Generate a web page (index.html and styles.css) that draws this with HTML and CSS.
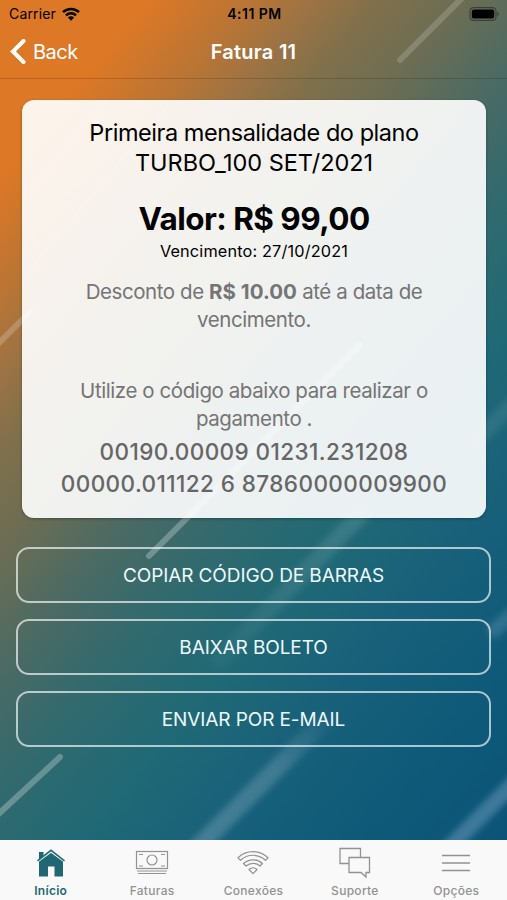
FILE: index.html
```
<!DOCTYPE html>
<html lang="pt-BR">
<head>
	<meta charset="UTF-8">
	<title>Fatura 11</title>
	<link rel="stylesheet" href="styles.css">
</head>
<body>
	<div class="app">
		<svg class="streaks" viewBox="0 0 507 840" aria-hidden="true">
			<defs>
				<filter id="soft" x="-20%" y="-20%" width="140%" height="140%">
					<feGaussianBlur stdDeviation="3"/>
				</filter>
				<linearGradient id="fadeUp" gradientUnits="userSpaceOnUse" x1="150" y1="554" x2="360" y2="345">
					<stop offset="0" stop-color="#fff" stop-opacity=".27"/>
					<stop offset="1" stop-color="#fff" stop-opacity=".25"/>
				</linearGradient>
				<linearGradient id="fadeEnds" gradientUnits="userSpaceOnUse" x1="355" y1="520" x2="215" y2="665">
					<stop offset="0" stop-color="#8fb3b8" stop-opacity=".24"/>
					<stop offset=".5" stop-color="#8fb3b8" stop-opacity=".16"/>
					<stop offset="1" stop-color="#8fb3b8" stop-opacity=".06"/>
				</linearGradient>
				<linearGradient id="fadeTop" gradientUnits="userSpaceOnUse" x1="335" y1="715" x2="200" y2="850">
					<stop offset="0" stop-color="#8fb3c4" stop-opacity="0"/>
					<stop offset=".4" stop-color="#8fb3c4" stop-opacity=".32"/>
					<stop offset="1" stop-color="#8fb3c4" stop-opacity=".36"/>
				</linearGradient>
			</defs>
			<!-- riscos nítidos -->
			<g fill="none" stroke="#fff" stroke-linecap="round" stroke-width="6">
				<path d="M400 60L466 -6" stroke-opacity=".17"/>
				<path d="M-10 352L30 312" stroke-opacity=".2"/>
				<path d="M149 556L360 345" stroke="url(#fadeUp)"/>
				<path d="M-10 822L60 757" stroke-opacity=".27"/>
			</g>
			<!-- riscos desfocados -->
			<g fill="none" filter="url(#soft)">
				<path d="M365 510L215 665" stroke="url(#fadeEnds)" stroke-width="17"/>
				<path d="M335 710L190 855" stroke="url(#fadeTop)" stroke-width="18"/>
				<path d="M530 767L435 862" stroke="#8fb3d0" stroke-opacity=".38" stroke-width="16"/>
				<path d="M525 602L490 634" stroke="#8fb3d0" stroke-opacity=".24" stroke-width="14"/>
				<path d="M525 392L472 445" stroke="#8fb3b8" stroke-opacity=".16" stroke-width="16"/>
			</g>
		</svg>

		<div class="screen">
			<header class="header">
				<div class="status">
					<div class="carrier">
						<span>Carrier</span>
						<svg width="18" height="14" viewBox="0 0 18 14">
							<g fill="none" stroke="#000" stroke-width="2.5">
								<path d="M1 5.2a11.3 11.3 0 0 1 16 0"/>
								<path d="M4 8.3a7.1 7.1 0 0 1 10 0"/>
							</g>
							<path d="M9 13.8L5.9 10.6a4.4 4.4 0 0 1 6.2 0z"/>
						</svg>
					</div>
					<span class="clock">4:11 PM</span>
					<svg class="battery" width="31" height="14" viewBox="0 0 31 14">
						<rect x="1" y=".7" width="26" height="12.6" rx="3.6" fill="none" stroke="#000" stroke-opacity=".4" stroke-width="1.2"/>
						<rect x="2.8" y="2.5" width="22.4" height="9" rx="2"/>
						<path d="M28.5 4.7a2.6 2.6 0 0 1 0 4.6z" fill-opacity=".4"/>
					</svg>
				</div>
				<div class="navbar">
					<a class="back" href="#">
						<svg width="16" height="26" viewBox="0 0 16 26">
							<path d="M13.5 2L3 12.5 13.500 23" fill="none" stroke="#fff" stroke-width="4" stroke-linecap="round"/>
						</svg>
						<span>Back</span>
					</a>
					<h1 class="title">Fatura 11</h1>
				</div>
			</header>

			<main class="content">
				<section class="card">
					<h2 class="plan"><span class="plan_name">Primeira mensalidade do plano</span><br>TURBO_100 SET/2021</h2>
					<p class="value">Valor: R$ 99,00</p>
					<p class="due">Vencimento: 27/10/2021</p>
					<p class="text discount">Desconto de <b>R$ 10.00</b> até a data de<br>vencimento.</p>
					<p class="text help">Utilize o código abaixo para realizar o<br>pagamento .</p>
					<p class="barcode">00190.00009 01231.231208<br>00000.011122 6 87860000009900</p>
				</section>
				<div class="actions">
					<button class="btn">COPIAR CÓDIGO DE BARRAS</button>
					<button class="btn">BAIXAR BOLETO</button>
					<button class="btn">ENVIAR POR E-MAIL</button>
				</div>
			</main>

			<nav class="tabs">
				<a class="tab active" href="#">
					<svg width="36" height="32" viewBox="0 0 36 32">
						<path fill="#1f6873" d="M6 5h4.500v5L18 4l12 10v15.500h-8.500v-10h-6.500v10H6z"/>
						<path d="M4 15.200L18 4.800l14 10.400" fill="none" stroke="#f9f9f9" stroke-width="1.500"/>
						<path d="M4.500 13.800L18 3.300l13.500 10.500" fill="none" stroke="#1f6873" stroke-width="1.500"/>
					</svg>
					<span>Início</span>
				</a>
				<a class="tab" href="#">
					<svg width="36" height="32" viewBox="0 0 36 32">
						<g fill="none" stroke="#929292" stroke-width="1.200">
							<rect x="2.500" y="4.500" width="31" height="17"/>
							<circle cx="18" cy="13" r="5"/>
							<path d="M5 7.500h4M27 7.500h4M5 19h4M27 19h4M3 24h30M4 26.500h28"/>
						</g>
					</svg>
					<span>Faturas</span>
				</a>
				<a class="tab" href="#">
					<svg width="36" height="32" viewBox="0 0 36 32">
						<g fill="none" stroke="#929292" stroke-width="1.200" stroke-linejoin="round">
							<path d="M3 10.800a21.500 21.500 0 0 1 30 0l-2.500 2.500a18 18 0 0 0-25 0z"/>
							<path d="M8.500 16.500a14 14 0 0 1 19 0l-2.500 2.500a10.500 10.500 0 0 0-14 0z"/>
							<path d="M14 22.500a6 6 0 0 1 8 0L18 26.700z"/>
						</g>
					</svg>
					<span>Conexões</span>
				</a>
				<a class="tab" href="#">
					<svg width="36" height="32" viewBox="0 0 36 32">
						<g fill="none" stroke="#929292" stroke-width="1.300">
							<path d="M12 16.500H3V1.500h20.500v9"/>
							<path d="M12 10.500h20.500v15h-3.500v4.500l-5-4.500H12z"/>
						</g>
					</svg>
					<span>Suporte</span>
				</a>
				<a class="tab" href="#">
					<svg width="36" height="32" viewBox="0 0 36 32">
						<path d="M4 8.500h28M4 16h28M4 23.500h28" fill="none" stroke="#929292" stroke-width="1.300"/>
					</svg>
					<span>Opções</span>
				</a>
			</nav>
		</div>
	</div>
</body>
</html>
```
FILE: styles.css
```
*{
	box-sizing: border-box;
}

body{
	margin: 0;
	font-family: Inter, "Liberation Sans", sans-serif;
}

h1, h2, p{
	margin: 0;
	font-weight: 400;
}

a{
	color: inherit;
	text-decoration: none;
}

/* fundo e tela ocupam a mesma célula */
.app{
	display: grid;
	width: 507px;
	height: 900px;
	overflow: hidden;
	background: linear-gradient(130deg, #dc7826 0%, #dc7826 12%, #b87535 20%, #9c7344 25%, #80704b 30%, #6b6d54 37%, #4a6a64 45%, #316a6e 53%, #206975 62%, #18607a 73%, #0e5a78 84%, #0b5078 100%);
}

.streaks{
	grid-area: 1 / 1;
	width: 507px;
	height: 840px;
}

.screen{
	grid-area: 1 / 1;
	display: flex;
	flex-direction: column;
	z-index: 1;
}

.header{
	height: 79px;
	border-bottom: 1px solid rgba(0, 0, 0, .16);
}

.status{
	display: grid;
	grid-template-columns: 1fr auto 1fr;
	align-items: center;
	height: 27px;
	padding: 0 7px 0 9px;
	font-size: 14px;
}

.carrier{
	display: flex;
	align-items: center;
	gap: 6px;
	letter-spacing: .15px;
}

.clock{
	font-weight: 600;
	letter-spacing: .5px;
}

.battery{
	justify-self: end;
}

.navbar{
	display: grid;
	grid-template-columns: 1fr auto 1fr;
	align-items: center;
	height: 50px;
	padding: 0 10px;
	color: #fff;
}

.back{
	display: flex;
	align-items: center;
	gap: 7px;
	font-size: 20px;
	letter-spacing: -.5px;
}

.title{
	font-size: 20px;
	font-weight: 600;
	letter-spacing: .25px;
}

.content{
	flex: 1;
	padding: 21px 16px 0;
}

.card{
	height: 418px;
	margin: 0 5px 0 6px;
	padding-top: 18px;
	border-radius: 12px;
	background: rgba(255, 255, 255, .91);
	box-shadow: 0 1px 3px rgba(0, 0, 0, .3);
	text-align: center;
	white-space: nowrap;
}

.plan{
	font-size: 23.5px;
	line-height: 29.5px;
	letter-spacing: -.05px;
}

.plan_name{
	letter-spacing: -.45px;
}

.value{
	margin-top: 22px;
	font-size: 31.5px;
	font-weight: 700;
	line-height: 40px;
	letter-spacing: -.55px;
}

.due{
	font-size: 16.3px;
	line-height: 24px;
	letter-spacing: .15px;
}

.text{
	color: #757575;
	font-size: 20.5px;
	line-height: 28px;
	letter-spacing: -.42px;
}

.text b{
	letter-spacing: 0;
}

.discount{
	margin-top: 15px;
}

.help{
	margin-top: 43px;
}

.barcode{
	margin-top: 3px;
	color: #666;
	font-size: 22.5px;
	font-weight: 500;
	line-height: 31.5px;
	letter-spacing: .42px;
}

.actions{
	display: flex;
	flex-direction: column;
	gap: 16px;
	margin-top: 29px;
}

.btn{
	height: 56px;
	padding: 1px 0 0;
	border: 2px solid rgba(255, 255, 255, .65);
	border-radius: 13px;
	background: none;
	color: #eef8fb;
	font-family: inherit;
	font-size: 19px;
	letter-spacing: -.1px;
}

.tabs{
	display: grid;
	grid-template-columns: repeat(5, 1fr);
	height: 60px;
	background: #f9f9f9;
}

.tab{
	display: flex;
	flex-direction: column;
	align-items: center;
	padding-top: 7px;
	color: #929292;
	font-size: 12px;
	font-weight: 500;
	line-height: 16px;
	letter-spacing: .3px;
}

.tab span{
	margin-top: 4px;
}

.active{
	color: #1f6873;
	font-weight: 600;
}
```
